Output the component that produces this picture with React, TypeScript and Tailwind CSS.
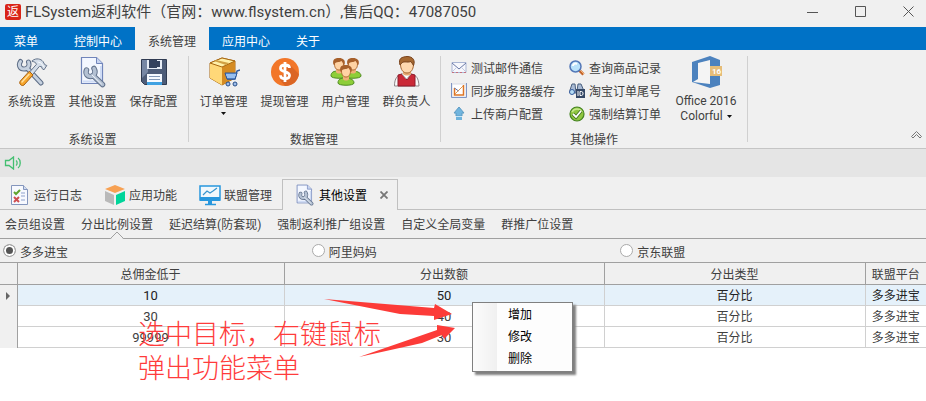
import type { ReactNode } from "react";

function ToolsIcon() {
  return (
    <svg viewBox="0 0 32 32" className="size-8" fill="none" strokeLinecap="round">
      <path d="M4.500 5.500C2 9 4 13 8 13s6-3.500 4.500-7M11 12l14 15" stroke="#5d6d86" strokeWidth="5" />
      <path d="M4.500 5.500C2 9 4 13 8 13s6-3.500 4.500-7M11 12l14 15" stroke="#c6d1df" strokeWidth="3" />
      <path d="M16.500 4.500c4-3 8.500-1.500 10.500 1l1.800 3.200 2 .8-2.800 4.300-2-1.300-.4-1.800-2.200-.3L13 23l-3-3L20.500 8.300c-.6-1.700-2-2.700-4-2.800Z" fill="#d4dde8" stroke="#66758b" />
      <path d="m13.500 15.500 3.500 3.500L8 29c-2 1.800-5.500-1.200-4-3.500Z" fill="#f7a62c" stroke="#a86112" />
      <path d="M13 18.500 6 26" stroke="#ffe1a0" strokeWidth="1.500" />
      <path d="M22 6l3 1 3 4" stroke="#f6f9fc" />
    </svg>
  );
}

function PageWrenchIcon({ className }: { className: string }) {
  return (
    <svg viewBox="0 0 32 32" className={className} fill="none">
      <path d="M4.500 1.500h15l6 6v20h-21Z" fill="#f3f7ff" stroke="#7185ba" strokeWidth="1.200" />
      <path d="M19.500 1.500v6h6" fill="#c8d5f1" stroke="#7185ba" />
      <path d="M6 25.500h18V10" stroke="#cfdcf5" strokeWidth="2" />
      <g strokeLinecap="round">
        <path d="M9.500 14c-1.500 4 1 6.500 4 6.500s6-3.500 3.500-8M16 19.500l9.500 9" stroke="#62728c" strokeWidth="5.500" />
        <path d="M9.500 14c-1.500 4 1 6.500 4 6.500s6-3.500 3.500-8M16 19.500l9.500 9" stroke="#b4c1d3" strokeWidth="3.500" />
        <path d="m15 19 9.500 9" stroke="#eef3f9" />
      </g>
    </svg>
  );
}

function SaveIcon() {
  return (
    <svg viewBox="0 0 32 32" className="size-8" fill="none">
      <path d="M3.500 3.500h25v25h-22l-3-3Z" fill="#4d5c78" stroke="#303b52" />
      <path d="M4 4h6v12L4 22Z" fill="#7787a4" />
      <path d="M9 4h15v9H9Z" fill="#e7edf6" />
      <path d="M11 4h8v8h-8Z" fill="#34425e" />
      <path d="M19 5h3v6h-3Z" fill="#34425e" />
      <path d="M9 18h15v10H9Z" fill="#f5f9ff" />
      <path d="M11 20.500h11M11 23.500h11" stroke="#8298b7" />
      <path d="M9 26h15v3H9Z" fill="#3fa1e2" />
    </svg>
  );
}

function BoxIcon() {
  return (
    <svg viewBox="0 0 32 32" className="size-8" fill="none">
      <path d="m2 7 12-5 13 3v17l-13 7L2 22Z" fill="#f2b43b" stroke="#a96812" />
      <path d="m2 7 12 4v18L2 22Z" fill="#ffd878" />
      <path d="m14 11 13-6v17l-13 7Z" fill="#d58b22" />
      <path d="m2 7 12-5 13 3-13 6Z" fill="#fff0a9" stroke="#a96812" />
      <path d="m8 4 13 3-3 2L6 5Z" fill="#d0a044" />
      <path d="m32 14-3 1-2 8H19" stroke="#325b9c" strokeWidth="1.500" />
      <path d="M17 17h12l-2 6h-8Z" fill="#6fa4e8" stroke="#2d5796" />
      <path d="M18 19h10M19 21h8" stroke="#c0daf8" />
      <circle cx="20" cy="28" r="2" fill="#9dbdea" stroke="#274e87" />
      <circle cx="27" cy="28" r="2" fill="#9dbdea" stroke="#274e87" />
    </svg>
  );
}

function CoinIcon() {
  return (
    <svg viewBox="0 0 32 32" className="size-8" fill="none">
      <circle cx="16" cy="16" r="14" fill="#f27628" />
      <path d="m20 8 10 10c-1 7-6 12-14 12l-5-6Z" fill="#db6524" />
      <path d="M20.500 12c0-2-2-3-4.500-3s-4.500 1.200-4.500 3.300c0 4.800 9 2.400 9 7 0 2.200-2 3.500-4.500 3.500s-4.500-1.200-4.500-3.500M16 6v20" stroke="white" strokeWidth="2.800" />
    </svg>
  );
}

function Person({ x, y }: { x: number; y: number }) {
  return (
    <g transform={`translate(${x} ${y})`}>
      <path d="M1 17c0-4 3-5 7-5s9 1 9 5c0 3-16 3-16 0Z" fill="#8dce38" stroke="#4f8c22" />
      <path d="M6 10v3c1 2 5 2 6 0v-3" fill="#efb077" />
      <path d="M4.500 5c0-7 9-7 9 0 0 4-2 6-4.500 6S4.500 9 4.500 5Z" fill="#ffd3a4" stroke="#ae672e" />
      <path d="M3.500 6C2 0 5-1 9-1s7 2 5.500 7l-3-4c-3 2-6 0-8 4Z" fill="#a7602b" />
    </g>
  );
}

function UsersIcon() {
  return (
    <svg viewBox="0 0 32 32" className="size-8" fill="none">
      <Person x={0} y={3} />
      <Person x={14} y={3} />
      <Person x={7} y={10} />
    </svg>
  );
}

function LeaderIcon() {
  return (
    <svg viewBox="0 0 32 32" className="size-8" fill="none">
      <path d="M3.500 30c0-8 3-11 8-12h8c6 1 8 4 8.500 12Z" fill="#fafafa" stroke="#8c8587" />
      <path d="M7 30V19l4-1 5 6 4-6 4 1v11Z" fill="#ca2937" stroke="#8e1d2c" />
      <path d="m11 18 4.500 5 4.500-5" fill="#fff" stroke="#b8b8b8" />
      <path d="M12 15v3c2 2 6 2 8 0v-3" fill="#e6a972" />
      <path d="M9.500 8c0-9 13-9 13 0 0 6-3 9-6.500 9S9.500 14 9.500 8Z" fill="#ffd8ae" stroke="#a66631" />
      <path d="M9 9C7 2 11 1 16 .5c6 0 8.500 4 6.500 9L20 5.500c-4 1.500-8-1-9.500 2Z" fill="#a56831" stroke="#79431d" />
    </svg>
  );
}

function OfficeIcon() {
  return (
    <svg viewBox="0 0 32 32" className="size-8" fill="none">
      <path d="M2 6 20 0l10 4v25l-10 3L2 26Z" fill="#4c82be" />
      <path d="m8 7 12-3v24L3 26l5-3Z" fill="#f4f4f4" />
      <path d="M20 10h12v10H20Z" fill="#e6bd78" />
      <text x="22" y="18" fill="white" fontSize="8" fontWeight="700" fontFamily="Roboto, sans-serif">16</text>
    </svg>
  );
}

function MailIcon() {
  return (
    <svg viewBox="0 0 16 16" className="size-4" fill="none">
      <path d="M1 2.500h14v10H1Z" fill="#f6f7fc" stroke="#a9b5d3" />
      <path d="m1 3 7 6 7-6" stroke="#6978a5" />
      <path d="m1 12 5-5m9 5-5-5" stroke="#c2cae0" />
      <path d="M1 12.500h14" stroke="#c4707e" strokeDasharray="2 2" />
    </svg>
  );
}

function SyncIcon() {
  return (
    <svg viewBox="0 0 16 16" className="size-4" fill="none">
      <path d="M1 1h14v13H1Z" fill="#fff" stroke="#d5d9e4" />
      <path d="M.5 0v14.500H15.500V0" stroke="#7f95c4" />
      <path d="M3.500 5v7h9V2" stroke="#de7525" strokeWidth="1.500" />
      <path d="m4 11 8-8" stroke="#de9a55" />
      <path d="m3.500 5 4 3" stroke="#5f75ab" />
    </svg>
  );
}

function UploadIcon() {
  return (
    <svg viewBox="0 0 16 16" className="size-4" fill="none">
      <path d="m8 1 5 6h-2v3H5V7H3Z" fill="#71b5de" stroke="#5f9cc4" />
      <path d="M5 11h6v3H5Z" fill="#6fb3dc" />
      <path d="M5 10.500h6" stroke="#c7e5f7" />
    </svg>
  );
}

function SearchIcon() {
  return (
    <svg viewBox="0 0 16 16" className="size-4" fill="none">
      <path d="m10 10 4.500 4.500" stroke="#c4642b" strokeWidth="3" />
      <path d="m11 10 4 4" stroke="#f6b779" />
      <circle cx="6.500" cy="6.500" r="5.500" fill="#b9e2fb" stroke="#5377b7" strokeWidth="1.500" />
      <path d="M4 6c0-2 2-3 4-2" stroke="white" strokeWidth="2" />
    </svg>
  );
}

function BinocularIcon() {
  return (
    <svg viewBox="0 0 16 16" className="size-4" fill="none">
      <path d="M3 1h3l1 9H1V7Zm6 0h3l3 7H8Z" fill="#a9bad4" stroke="#4b607f" />
      <circle cx="3" cy="9" r="2.500" fill="#b6ddf5" stroke="#355b9c" />
      <path d="M7 6h9v9H7Z" fill="#344765" />
      <path d="M9 8v5M11 8.500v4h1.500l1.500-1v-2l-1.500-1Z" stroke="white" />
    </svg>
  );
}

function CheckIcon() {
  return (
    <svg viewBox="0 0 16 16" className="size-4" fill="none">
      <circle cx="8" cy="8" r="7" fill="#8fc640" stroke="#448320" strokeWidth="1.200" />
      <path d="M3 6c2-4 8-4 10 0" stroke="#c6e88b" strokeWidth="1.500" />
      <path d="m4 8 3 3 5-6" stroke="#44731f" strokeWidth="3.500" />
      <path d="m4 8 3 3 5-6" stroke="white" strokeWidth="1.800" />
    </svg>
  );
}

function LogIcon() {
  return (
    <svg viewBox="0 0 22 22" className="size-[22px]" fill="none">
      <path d="M2.500 1.500h12l4 4v15h-16Z" fill="#f7f9fe" stroke="#8496bd" />
      <path d="M14.500 1.500v4h4" fill="#d2dcf0" stroke="#8496bd" />
      <path d="m5 8 2 2 4-4" stroke="#5fa42d" strokeWidth="2" />
      <path d="m5 13 5 5m0-5-5 5" stroke="#cf4e50" strokeWidth="2" />
      <path d="M12 9h4M12 12h4M12 16h4" stroke="#8fa3cc" />
    </svg>
  );
}

function CubeIcon() {
  return (
    <svg viewBox="0 0 22 22" className="size-[22px]">
      <path d="m1 5 10-4 10 4-10 4Z" fill="#f7a153" />
      <path d="m1 7 9 4v10l-9-4Z" fill="#b9b9b9" />
      <path d="m21 7-9 4v10l9-4Z" fill="#00d59a" />
    </svg>
  );
}

function MonitorIcon() {
  return (
    <svg viewBox="0 0 22 22" className="size-[22px]" fill="none">
      <path d="M1 2h20v14H1Z" fill="#f1f8fc" stroke="#2797dd" strokeWidth="1.500" />
      <path d="M1 13h20v4H1ZM9 17h4v3H9Z" fill="#2797dd" />
      <path d="M6 20.500h11" stroke="#2797dd" strokeWidth="1.500" />
      <path d="m4 11 4-4 3 2 3-2 4-3" stroke="#3995ce" strokeWidth="1.200" />
    </svg>
  );
}

const menuTabs = ["控制中心", "系统管理", "应用中心", "关于"];

const smallActions: { icon: ReactNode; label: string }[][] = [
  [
    { icon: <MailIcon />, label: "测试邮件通信" },
    { icon: <SyncIcon />, label: "同步服务器缓存" },
    { icon: <UploadIcon />, label: "上传商户配置" },
  ],
  [
    { icon: <SearchIcon />, label: "查询商品记录" },
    { icon: <BinocularIcon />, label: "淘宝订单尾号" },
    { icon: <CheckIcon />, label: "强制结算订单" },
  ],
];

const pageTabs = [
  { icon: <LogIcon />, label: "运行日志", className: "pl-[9px] pr-[11px]" },
  { icon: <CubeIcon />, label: "应用功能", className: "px-[11px]" },
  { icon: <MonitorIcon />, label: "联盟管理", className: "pl-[11px] pr-[10px]" },
];

const settingTabs = ["会员组设置", "分出比例设置", "延迟结算(防套现)", "强制返利推广组设置", "自定义全局变量", "群推广位设置"];

const platforms = ["多多进宝", "阿里妈妈", "京东联盟"];

const rows = [
  { limit: "10", amount: "50" },
  { limit: "30", amount: "40" },
  { limit: "99999", amount: "30" },
];

function Caret() {
  return (
    <svg viewBox="0 0 5 3" className="h-[3px] w-[5px]">
      <path d="M0 0h5L2.500 3Z" fill="#111" />
    </svg>
  );
}

function BigButton({ icon, label, caret }: { icon: ReactNode; label: string; caret?: boolean }) {
  return (
    <button className="flex h-16 w-[61px] shrink-0 flex-col items-center whitespace-nowrap">
      {icon}
      <span className="mt-1 leading-5">{label}</span>
      {caret && <Caret />}
    </button>
  );
}

function Group({ title, className, children }: { title: string; className: string; children: ReactNode }) {
  return (
    <section className={`flex h-[86px] flex-col justify-between border-r border-[#d0d0d0] ${className}`}>
      <div className="flex">{children}</div>
      <h2 className="text-center leading-1">{title}</h2>
    </section>
  );
}

export default function App() {
  return (
    <div className="relative flex min-h-screen flex-col overflow-hidden bg-white font-[Roboto,'Noto_Sans_CJK_SC',sans-serif] text-xs text-[#404040]">
      <header className="flex h-[27px] items-center bg-[#f0f0f0] pl-[5px] pr-3">
        <span className="mb-1 flex size-4 items-center justify-center rounded-xs bg-[#d92418] text-xs text-white">返</span>
        <h1 className="ml-1 flex-1 whitespace-nowrap pb-[3px] text-[15px] leading-6">
          FLSystem返利软件（官网：www.flsystem.cn）,售后QQ：47087050
        </h1>
        <div className="flex gap-[37px] pb-1">
          <button aria-label="最小化">
            <svg viewBox="0 0 11 11" className="size-[11px]"><path d="M0 6.500h11" stroke="#555" /></svg>
          </button>
          <button aria-label="最大化">
            <svg viewBox="0 0 11 11" className="size-[11px]"><path d="M.5.5h10v10H.5Z" fill="none" stroke="#555" /></svg>
          </button>
          <button aria-label="关闭">
            <svg viewBox="0 0 11 11" className="size-[11px]"><path d="m.5.5 10 10m0-10-10 10" stroke="#555" /></svg>
          </button>
        </div>
      </header>

      <nav className="flex h-[23px] bg-[#0072c6] text-white">
        <button className="w-[61px] pl-[14px] pt-[6px] text-left">菜单</button>
        {menuTabs.map((tab) => (
          <button key={tab} className={`px-[13px] pt-[6px] ${tab === "系统管理" ? "bg-[#f0f0f0] text-[#404040]" : ""}`}>
            {tab}
          </button>
        ))}
      </nav>

      {/* Ribbon */}
      <div className="flex h-[99px] border-b border-[#c5c5c5] bg-[#f0f0f0] pt-[6px]">
        <Group title="系统设置" className="w-[189px] pl-px pr-1">
          <BigButton icon={<ToolsIcon />} label="系统设置" />
          <BigButton icon={<PageWrenchIcon className="size-8" />} label="其他设置" />
          <BigButton icon={<SaveIcon />} label="保存配置" />
        </Group>
        <Group title="数据管理" className="w-[252px] pl-1 pr-[5px]">
          <BigButton icon={<BoxIcon />} label="订单管理" caret />
          <BigButton icon={<CoinIcon />} label="提现管理" />
          <BigButton icon={<UsersIcon />} label="用户管理" />
          <BigButton icon={<LeaderIcon />} label="群负责人" />
        </Group>
        <Group title="其他操作" className="w-[307px]">
          <div className="flex pl-[10px]">
            {smallActions.map((column, i) => (
              <div key={i} className="w-[118px]">
                {column.map((action) => (
                  <button key={action.label} className="flex h-[23px] items-center gap-1 whitespace-nowrap">
                    {action.icon}
                    <span className="pt-[2px]">{action.label}</span>
                  </button>
                ))}
              </div>
            ))}
          </div>
          <button className="-ml-[18px] flex w-[74px] flex-col items-center whitespace-nowrap leading-[15px]">
            <OfficeIcon />
            <span className="mt-[6px]">Office 2016</span>
            <span className="flex items-center gap-1">
              Colorful <Caret />
            </span>
          </button>
        </Group>
        <button aria-label="折叠功能区" className="mb-2 ml-auto mr-1 self-end">
          <svg viewBox="0 0 11 9" className="h-[9px] w-[11px]" fill="none">
            <path d="M.5 5.500 5.500.5l5 5-1.500 1.500-3.500-3.500L2 7Z" stroke="#777" />
          </svg>
        </button>
      </div>

      <div className="flex h-7 items-center bg-[#e5e5e5] pl-1">
        <svg viewBox="0 0 18 14" className="h-[14px] w-[18px]" fill="none" stroke="#43bf70" strokeWidth="1.300">
          <path d="M1.500 4.500H5l4.500-3.500v12L5 9.500H1.500ZM12 4.500c1.500 1 1.500 4 0 5M14 2c3 2 3 8 0 10" />
        </svg>
      </div>

      <div className="flex h-[33px] bg-[#f0f0f0]">
        {pageTabs.map((tab) => (
          <button key={tab.label} className={`flex items-center gap-[3px] whitespace-nowrap border-b border-[#c0c0c0] pt-1 ${tab.className}`}>
            {tab.icon}
            <span className="pt-px">{tab.label}</span>
          </button>
        ))}
        <div className="mt-[2px] flex w-[116px] items-center border-x border-t border-[#c0c0c0] pl-[11px] text-black">
          <button className="flex items-center gap-[3px] whitespace-nowrap">
            <PageWrenchIcon className="size-[22px]" />
            <span className="pt-px">其他设置</span>
          </button>
          <button aria-label="关闭标签" className="ml-[13px]">
            <svg viewBox="0 0 8 8" className="size-2"><path d="m.5.5 7 7m0-7-7 7" stroke="#777" strokeWidth="1.800" /></svg>
          </button>
        </div>
        <div className="flex-1 border-b border-[#c0c0c0]" />
      </div>

      <nav className="flex h-[29px] gap-4 whitespace-nowrap border-b border-[#a0a0a0] bg-[#f0f0f0] pl-[5px]">
        {settingTabs.map((tab) => (
          <button key={tab} className="relative h-[29px]">
            {tab}
            {tab === "分出比例设置" && (
              <svg viewBox="0 0 14 8" className="absolute bottom-0 left-1/2 h-2 w-[14px] -translate-x-1/2">
                <path d="M.5 7.500 7 1l6.500 6.500" fill="#f0f0f0" stroke="#a0a0a0" />
                <path d="M1.500 7.500h11" stroke="#f0f0f0" />
              </svg>
            )}
          </button>
        ))}
      </nav>

      <div className="grid h-[23px] grid-cols-3 bg-[#f0f0f0]">
        {platforms.map((name, i) => (
          <label key={name} className="flex items-center gap-1 pl-[3px]">
            <input
              type="radio"
              name="platform"
              defaultChecked={i === 0}
              className="size-[13px] appearance-none rounded-full border border-[#aaa] bg-white checked:bg-[#555] checked:shadow-[inset_0_0_0_2px_white]"
            />
            <span className="pt-1">{name}</span>
          </label>
        ))}
      </div>

      <table className="w-full table-fixed border-collapse text-center">
        <colgroup>
          <col className="w-[17px]" />
          <col className="w-[267px]" />
          <col className="w-[320px]" />
          <col className="w-[261px]" />
          <col className="w-[61px]" />
        </colgroup>
        <thead>
          <tr className="h-[22px] bg-[#f0f0f0] *:border *:border-[#a0a0a0] *:px-0 *:pb-0 *:pt-[2px] *:font-normal *:first:border-l-0 *:last:border-r-0">
            <th />
            <th>总佣金低于</th>
            <th>分出数额</th>
            <th>分出类型</th>
            <th className="whitespace-nowrap">联盟平台</th>
          </tr>
        </thead>
        <tbody>
          {rows.map((row, i) => (
            <tr key={row.limit} className={`h-[21px] *:px-0 *:pb-0 *:pt-[2px] *:leading-[18px] ${i === 0 ? "bg-[#e5f1fa] text-[#222]" : ""}`}>
              <td className="border-r border-r-[#a0a0a0] bg-[#f0f0f0]">
                {i === 0 && (
                  <svg viewBox="0 0 4 8" className="mx-auto h-2 w-1"><path d="m0 0 4 4-4 4Z" fill="#666" /></svg>
                )}
              </td>
              <td className="border-b border-r border-[#d0d0d0] text-[13px]">{row.limit}</td>
              <td className="border-b border-r border-[#d0d0d0] text-[13px]">{row.amount}</td>
              <td className="border-b border-r border-[#d0d0d0]">百分比</td>
              <td className="whitespace-nowrap border-b border-[#d0d0d0]">多多进宝</td>
            </tr>
          ))}
        </tbody>
      </table>

      {/* Hint drawn over the grid */}
      <p className="pointer-events-none absolute left-[138px] top-[316px] whitespace-nowrap font-['Noto_Sans_CJK_SC',sans-serif] text-[27px] font-light leading-[34px] text-[#ff3b3b]">
        选中目标，右键鼠标
        <br />
        弹出功能菜单
      </p>
      <svg viewBox="0 0 134 62" className="pointer-events-none absolute left-[322px] top-[297px] h-[62px] w-[134px]" fill="#fc3b38">
        <path d="m2 2 110 9 1-4 17 10-18 6v-4l-34-2Z" />
        <path d="m37 60 78-27v-5l18 3-11 11-2-4-20 8Z" />
      </svg>

      <div role="menu" className="absolute left-[472px] top-[302px] w-[101px] border border-[#808080] bg-[linear-gradient(90deg,#fcfcfc_0,#f0f0f0_24px,#fdfdfd_24px)] py-px text-black shadow-[3px_3px_2px_#808080]">
        {["增加", "修改", "删除"].map((item) => (
          <button key={item} role="menuitem" className="block h-[22px] w-full pl-[35px] text-left">
            {item}
          </button>
        ))}
      </div>
    </div>
  );
}
